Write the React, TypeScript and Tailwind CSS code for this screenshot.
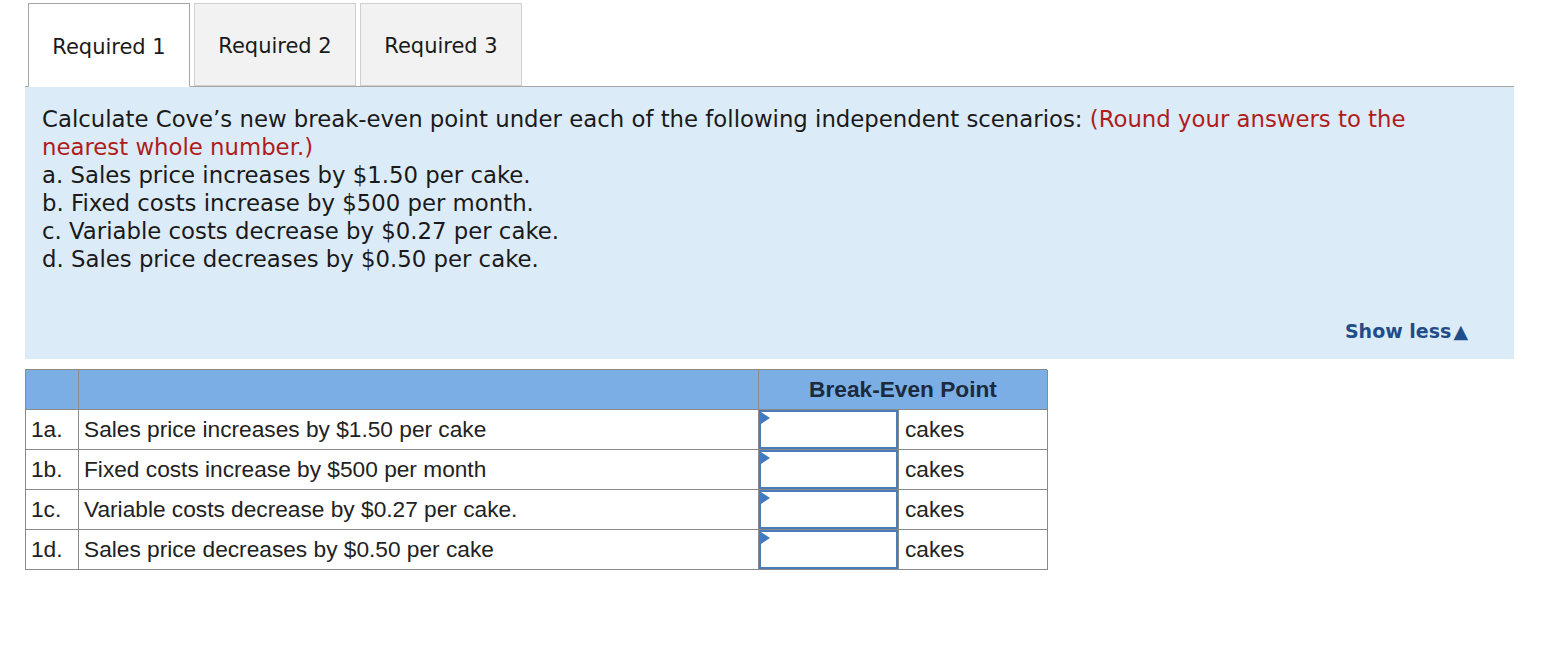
import { Fragment } from 'react'

const tabs = ['Required 1', 'Required 2', 'Required 3']

const scenarios = [
  'a. Sales price increases by $1.50 per cake.',
  'b. Fixed costs increase by $500 per month.',
  'c. Variable costs decrease by $0.27 per cake.',
  'd. Sales price decreases by $0.50 per cake.',
]

const rows = [
  { id: '1a.', label: 'Sales price increases by $1.50 per cake' },
  { id: '1b.', label: 'Fixed costs increase by $500 per month' },
  { id: '1c.', label: 'Variable costs decrease by $0.27 per cake.' },
  { id: '1d.', label: 'Sales price decreases by $0.50 per cake' },
]

function AnswerInput() {
  return (
    <div className="relative h-full w-full">
      <input className="h-full w-full border-2 border-[#4a7cb8] bg-white outline-none" />
      <span className="absolute left-0.5 top-0.5 h-0 w-0 border-y-[6px] border-l-[9px] border-y-transparent border-l-[#3f79c2]" />
    </div>
  )
}

export default function App() {
  return (
    <div className="min-h-[648px] bg-white pl-[25px] pt-[3px] text-[#1a1a1a]" style={{ fontFamily: '"DejaVu Sans", Verdana, sans-serif' }}>
      <div className="flex h-[84px] gap-1 pl-[3px]">
        {tabs.map((t, i) => (
          <div
            key={t}
            className={`flex w-[162px] items-center justify-center border pt-[5px] text-[21px] ${
              i === 0 ? 'relative z-10 h-[84px] border-[#a6a6a6] border-b-white bg-white' : 'h-[83px] border-[#cfcfcf] bg-[#f2f2f2]'
            }`}
          >
            {t}
          </div>
        ))}
      </div>

      <div className="-mt-px flex h-[273px] w-[1489px] flex-col border-t border-[#a6a6a6] bg-[#dcebf8] pl-[17px] pr-[46px] pt-[18px] text-[22.8px] leading-[28px]">
        <p>
          Calculate Cove’s new break-even point under each of the following independent scenarios:{' '}
          <span className="text-[#b01c1c]">(Round your answers to the nearest whole number.)</span>
        </p>
        {scenarios.map(s => (
          <p key={s}>{s}</p>
        ))}
        <div className="mt-auto mb-[14px] flex items-center justify-end gap-0.5 text-[19px] font-bold text-[#1f4d8a]">
          Show less
          <span className="text-[19px] leading-none">▲</span>
        </div>
      </div>

      <div
        className="mt-[10px] grid w-[1022px] grid-cols-[53px_680px_140px_149px] border-l border-t border-[#8a8a8a] text-[22.7px] text-[#222]"
        style={{ fontFamily: '"Liberation Sans", Arial, sans-serif' }}
      >
        <div className="h-[40px] border-b border-r border-[#8a8a8a] bg-[#7aaee4]" />
        <div className="h-[40px] border-b border-r border-[#8a8a8a] bg-[#7aaee4]" />
        <div className="col-span-2 flex h-[40px] items-center justify-center border-b border-r border-[#8a8a8a] bg-[#7aaee4] font-bold text-[#1c2a3c]">
          Break-Even Point
        </div>
        {rows.map(r => (
          <Fragment key={r.id}>
            <div className="flex h-[40px] items-center border-b border-r border-[#8a8a8a] pl-[5px]">{r.id}</div>
            <div className="flex h-[40px] items-center border-b border-r border-[#8a8a8a] pl-[5px]">{r.label}</div>
            <div className="h-[40px] border-b border-r border-[#8a8a8a]">
              <AnswerInput />
            </div>
            <div className="flex h-[40px] items-center border-b border-r border-[#8a8a8a] pl-[6px]">cakes</div>
          </Fragment>
        ))}
      </div>
    </div>
  )
}
